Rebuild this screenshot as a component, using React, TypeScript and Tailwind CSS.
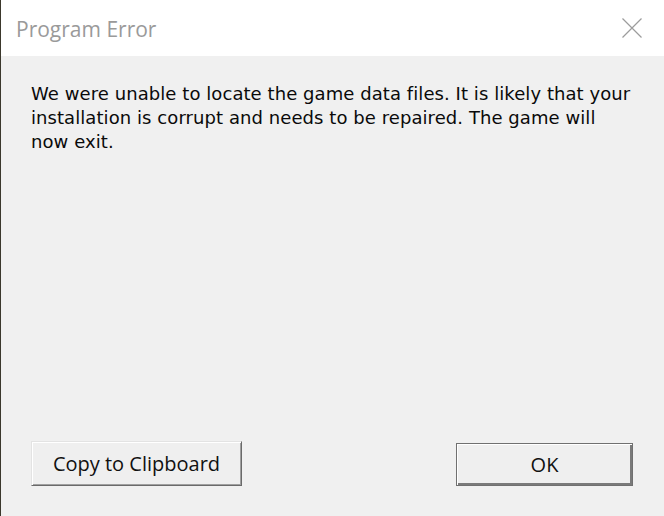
import React from 'react';

const App: React.FC = () => {
    return (
        <div className="w-[664px] h-[516px] flex bg-[#3b382c] overflow-hidden">
            <div className="ml-px flex-1 flex flex-col">
                {/* Title bar */}
                <div className="h-[56px] bg-white flex items-center justify-between pl-[15px] pr-[21px]">
                    <span className="mt-[3px] text-[21px] text-[#9a9a9a] font-['Open_Sans',sans-serif]">
                        Program Error
                    </span>
                    <svg width="22" height="22" viewBox="0 0 22 22" className="mt-[-1px]">
                        <path d="M1.5 1.5 L20.5 20.5 M20.5 1.5 L1.5 20.5" stroke="#9c9c9c" strokeWidth="1.2" fill="none" />
                    </svg>
                </div>

                {/* Body */}
                <div className="flex-1 flex flex-col bg-[#f0f0f0] pl-[30px] pr-[31px] pt-[26px] pb-[30px]">
                    <p className="text-[18px] leading-[24px] tracking-[0.07px] text-[#0a0a0a] font-['DejaVu_Sans',sans-serif]">
                        We were unable to locate the game data files. It is likely that your installation is corrupt and needs to be repaired. The game will now exit.
                    </p>

                    <div className="mt-auto flex items-end justify-between">
                        <button className="w-[211px] h-[45px] bg-[#efefef] border border-t-[#e3e3e3] border-l-[#e3e3e3] border-r-[#6a6a6a] border-b-[#6a6a6a] shadow-[inset_1px_1px_0_#ffffff,inset_-1px_-1px_0_#a0a0a0] text-[20px] text-[#111] font-['Open_Sans',sans-serif]">
                            Copy to Clipboard
                        </button>
                        <button className="w-[177px] h-[43px] bg-[#efefef] border border-[#707070] shadow-[inset_1px_1px_0_#ffffff,inset_-2px_-2px_0_#7a7a7a] text-[20px] text-[#111] font-['Open_Sans',sans-serif]">
                            OK
                        </button>
                    </div>
                </div>
            </div>
        </div>
    );
};

export default App;
